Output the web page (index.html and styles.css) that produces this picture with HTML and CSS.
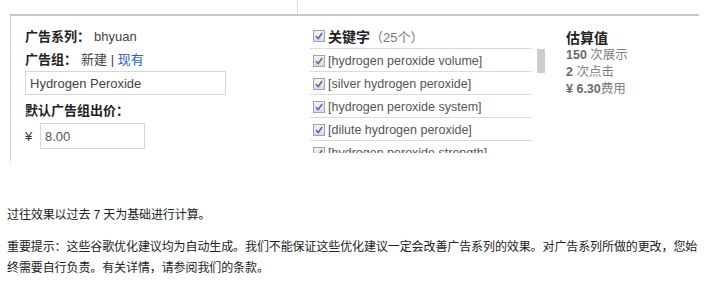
FILE: index.html
```html
<!DOCTYPE html>
<html lang="zh-CN">
<head>
    <meta charset="UTF-8">
    <title>优化建议</title>
    <link rel="stylesheet" href="styles.css">
</head>
<body>
    <div class="top-row">
        <div class="top-cell"></div>
    </div>

    <div class="panel">
        <div class="col-left">
            <div class="field-line"><b class="label">广告系列：</b><span class="value">bhyuan</span></div>
            <div class="field-line"><b class="label">广告组：</b><span class="value">新建 | <a href="#" class="link">现有</a></span></div>
            <input class="text-input name-input" type="text" value="Hydrogen Peroxide">
            <div class="field-line bid-label"><b class="label">默认广告组出价：</b></div>
            <div class="bid-row">
                <span class="currency">¥</span>
                <input class="text-input bid-input" type="text" value="8.00">
            </div>
        </div>

        <div class="col-mid">
            <div class="kw-head">
                <span class="check"><svg viewBox="0 0 10 10" width="10" height="10"><path d="M2 5.2 L4.2 7.6 L8.2 2" fill="none" stroke="#3b6fb6" stroke-width="1.6"/></svg></span>
                <b class="kw-title">关键字</b><span class="kw-count">（25个）</span>
            </div>
            <div class="kw-box">
                <div class="kw-list">
                    <div class="kw-item"><span class="check"><svg viewBox="0 0 10 10" width="10" height="10"><path d="M2 5.2 L4.2 7.6 L8.2 2" fill="none" stroke="#3b6fb6" stroke-width="1.6"/></svg></span>[hydrogen peroxide volume]</div>
                    <div class="kw-item"><span class="check"><svg viewBox="0 0 10 10" width="10" height="10"><path d="M2 5.2 L4.2 7.6 L8.2 2" fill="none" stroke="#3b6fb6" stroke-width="1.6"/></svg></span>[silver hydrogen peroxide]</div>
                    <div class="kw-item"><span class="check"><svg viewBox="0 0 10 10" width="10" height="10"><path d="M2 5.2 L4.2 7.6 L8.2 2" fill="none" stroke="#3b6fb6" stroke-width="1.6"/></svg></span>[hydrogen peroxide system]</div>
                    <div class="kw-item"><span class="check"><svg viewBox="0 0 10 10" width="10" height="10"><path d="M2 5.2 L4.2 7.6 L8.2 2" fill="none" stroke="#3b6fb6" stroke-width="1.6"/></svg></span>[dilute hydrogen peroxide]</div>
                    <div class="kw-item"><span class="check"><svg viewBox="0 0 10 10" width="10" height="10"><path d="M2 5.2 L4.2 7.6 L8.2 2" fill="none" stroke="#3b6fb6" stroke-width="1.6"/></svg></span>[hydrogen peroxide strength]</div>
                </div>
                <div class="scroll-track"><div class="scroll-thumb"></div></div>
            </div>
        </div>

        <div class="col-right">
            <div class="est-title">估算值</div>
            <div class="est-line"><b>150</b> 次展示</div>
            <div class="est-line"><b>2</b> 次点击</div>
            <div class="est-line"><b>¥ 6.30</b>费用</div>
        </div>
    </div>

    <div class="notes">
        <p>过往效果以过去 7 天为基础进行计算。</p>
        <p>重要提示：这些谷歌优化建议均为自动生成。我们不能保证这些优化建议一定会改善广告系列的效果。对广告系列所做的更改，您始终需要自行负责。有关详情，请参阅我们的条款。</p>
    </div>
</body>
</html>
```

FILE: styles.css
```css
body {
    font-family: 'Liberation Sans', Arial, 'Noto Sans CJK SC', sans-serif;
    font-size: 12px;
    margin: 0;
    padding: 0;
    background: #fff;
    color: #333;
    width: 705px;
    height: 290px;
    overflow: hidden;
}

.top-row {
    height: 14px;
    display: flex;
}

.top-cell {
    width: 297px;
    height: 14px;
    border-right: 1px solid #dedede;
}

.panel {
    margin-left: 10px;
    width: 688px;
    height: 145px;
    border-top: 2px solid #c8c8c8;
    border-left: 1px solid #cfcfcf;
    display: flex;
}

/* left column */
.col-left {
    width: 285px;
    padding: 9px 0 0 14px;
}

.field-line {
    height: 24px;
    line-height: 24px;
    white-space: nowrap;
}

.field-line + .field-line {
    height: 22px;
    line-height: 22px;
}

.label {
    font-weight: bold;
    font-size: 13px;
    color: #222;
}

.value {
    color: #444;
    margin-left: 6px;
    font-size: 13px;
}

.field-line .value {
    margin-left: 4px;
}

.link {
    color: #2a62c9;
    text-decoration: none;
}

.text-input {
    display: block;
    box-sizing: border-box;
    border: 1px solid #d6d6d6;
    font-family: 'Liberation Sans', Arial, sans-serif;
    font-size: 13px;
    color: #444;
    padding: 0 4px;
    margin: 0;
    outline: none;
}

.name-input {
    width: 201px;
    height: 24px;
}

.bid-label {
    margin-top: 4px;
    height: 24px;
    line-height: 24px;
}

.bid-row {
    display: flex;
    align-items: center;
    height: 26px;
}

.currency {
    width: 15px;
    font-size: 13px;
    color: #333;
}

.bid-input {
    width: 105px;
    height: 26px;
    color: #555;
}

/* keyword column */
.col-mid {
    width: 237px;
}

.kw-head {
    height: 24px;
    margin-top: 8px;
    display: flex;
    align-items: center;
    padding-left: 3px;
    white-space: nowrap;
}

.kw-title {
    font-size: 14px;
    color: #222;
}

.kw-count {
    font-size: 13px;
    color: #777;
}

.check {
    display: inline-flex;
    align-items: center;
    justify-content: center;
    box-sizing: border-box;
    width: 12px;
    height: 12px;
    border: 1px solid #a3a3a3;
    background: linear-gradient(#f2f2f2, #dcdcdc);
    margin-right: 3px;
    flex-shrink: 0;
}

.kw-box {
    display: flex;
    height: 105px;
    overflow: hidden;
}

.kw-list {
    width: 222px;
}

.kw-item {
    height: 22px;
    border-top: 1px solid #dcdcdc;
    display: flex;
    align-items: center;
    padding: 2px 0 0 3px;
    box-sizing: content-box;
    height: 20px;
    font-size: 12.5px;
    color: #555;
    white-space: nowrap;
}

.scroll-track {
    width: 8px;
    margin-left: 5px;
    padding-top: 1px;
}

.scroll-thumb {
    height: 24px;
    background: #cdcdcd;
}

/* estimate column */
.col-right {
    margin-left: 19px;
    padding-top: 14px;
    color: #808080;
}

.est-title {
    font-size: 14px;
    font-weight: bold;
    color: #222;
    line-height: 17px;
}

.est-line {
    font-size: 12.5px;
    line-height: 17px;
}

.est-line b {
    color: #6a6a6a;
}

/* notes */
.notes {
    padding: 0 0 0 7px;
    margin-top: 44px;
    color: #222;
    font-size: 12px;
    letter-spacing: -0.1px;
}

.notes p {
    margin: 0 0 11px;
    line-height: 21px;
}
```
